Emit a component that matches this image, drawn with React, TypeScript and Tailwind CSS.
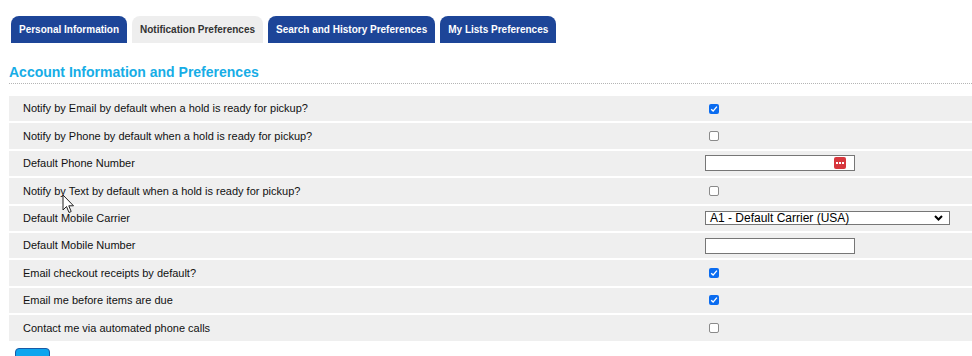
const tabs = [
  { label: "Personal Information", active: false },
  { label: "Notification Preferences", active: true },
  { label: "Search and History Preferences", active: false },
  { label: "My Lists Preferences", active: false },
];

type Row = { label: string; kind: "check" | "text" | "select" | "phone"; checked?: boolean };

const rows: Row[] = [
  { label: "Notify by Email by default when a hold is ready for pickup?", kind: "check", checked: true },
  { label: "Notify by Phone by default when a hold is ready for pickup?", kind: "check" },
  { label: "Default Phone Number", kind: "phone" },
  { label: "Notify by Text by default when a hold is ready for pickup?", kind: "check" },
  { label: "Default Mobile Carrier", kind: "select" },
  { label: "Default Mobile Number", kind: "text" },
  { label: "Email checkout receipts by default?", kind: "check", checked: true },
  { label: "Email me before items are due", kind: "check", checked: true },
  { label: "Contact me via automated phone calls", kind: "check" },
];

const Check = ({ checked }: { checked?: boolean }) =>
  checked ? (
    <span className="ml-[4px] flex h-[10px] w-[10px] items-center justify-center rounded-[2px] bg-[#0b6cf0]">
      <svg width="8" height="8" viewBox="0 0 8 8">
        <path d="M1.2 4.3 L3.1 6.1 L6.9 1.6" fill="none" stroke="white" strokeWidth="1.4" />
      </svg>
    </span>
  ) : (
    <span className="ml-[4px] h-[10px] w-[10px] rounded-[2px] border border-[#8a8a8a] bg-white" />
  );

const Field = ({ row }: { row: Row }) => {
  if (row.kind === "check") return <Check checked={row.checked} />;
  if (row.kind === "select")
    return (
      <div className="flex h-[14px] w-[245px] items-center justify-between border border-[#767676] bg-white pl-[4px] pr-[6px] text-[12px] leading-none text-black">
        <span>A1 - Default Carrier (USA)</span>
        <svg width="9" height="6" viewBox="0 0 9 6">
          <path d="M1 1 L4.5 4.5 L8 1" fill="none" stroke="black" strokeWidth="2" />
        </svg>
      </div>
    );
  return (
    <div className="flex h-[16px] w-[150px] items-center justify-end border border-[#767676] bg-white pr-[8px]">
      {row.kind === "phone" && (
        <span className="flex h-[12px] w-[12px] items-center justify-center gap-[1px] rounded-[2px] bg-[#d7373d]">
          <span className="h-[2px] w-[2px] bg-white" />
          <span className="h-[2px] w-[2px] bg-white" />
          <span className="h-[2px] w-[2px] bg-white" />
        </span>
      )}
    </div>
  );
};

export default function App() {
  return (
    <div className="relative h-[356px] overflow-hidden bg-white pl-[9px] font-['Liberation_Sans',Arial,sans-serif]">
      <div className="flex gap-[5px] pl-[2px] pt-[16px]">
        {tabs.map((t) => (
          <div
            key={t.label}
            className={
              t.active
                ? "flex h-[27px] items-center rounded-t-[8px] bg-[#eeeeee] px-[8px] text-[10px] font-bold text-[#333333]"
                : "flex h-[27px] items-center rounded-t-[8px] bg-[#1d4598] px-[8px] text-[10px] font-bold text-white"
            }
          >
            {t.label}
          </div>
        ))}
      </div>

      <h2 className="mt-[20px] border-b border-dotted border-[#b5b5b5] pb-[1px] text-[14px] font-bold leading-[19px] text-[#17ade6]">
        Account Information and Preferences
      </h2>

      <div className="mt-[12px] flex flex-col gap-[2px]">
        {rows.map((r) => (
          <div key={r.label} className="grid h-[25.4px] grid-cols-[696px_1fr] items-center bg-[#efefef]">
            <span className="pl-[14px] text-[11px] text-[#111111]">{r.label}</span>
            <div className="flex items-center">
              <Field row={r} />
            </div>
          </div>
        ))}
      </div>

      <button
        aria-label="Save"
        className="ml-[6px] mt-[7px] block h-[26px] w-[35px] rounded-[4px] border border-[#1b5aa5] bg-[#0ea5ee]"
      />

      <svg className="absolute left-[62px] top-[194px]" width="13" height="20" viewBox="0 0 13 20">
        <path d="M1 1 L1 16 L4.5 12.5 L7 18.5 L9.2 17.5 L6.8 11.8 L11.5 11.8 Z" fill="white" stroke="#222" strokeWidth="1" strokeLinejoin="round" />
      </svg>
    </div>
  );
}
